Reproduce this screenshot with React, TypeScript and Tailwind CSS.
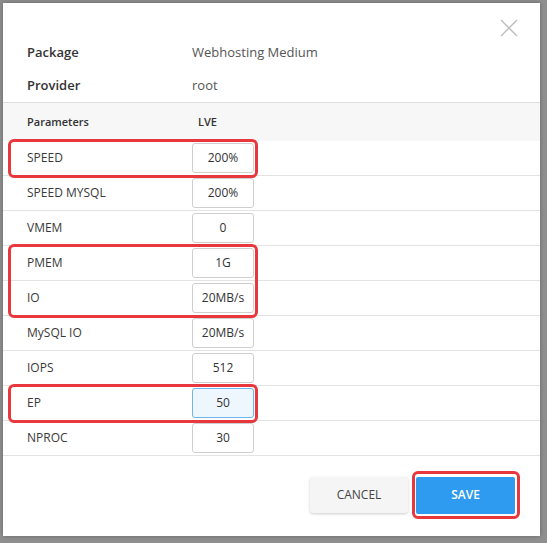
import React from "react";

const rows: { label: string; value: string }[] = [
  { label: "SPEED", value: "200%" },
  { label: "SPEED MYSQL", value: "200%" },
  { label: "VMEM", value: "0" },
  { label: "PMEM", value: "1G" },
  { label: "IO", value: "20MB/s" },
  { label: "MySQL IO", value: "20MB/s" },
  { label: "IOPS", value: "512" },
  { label: "EP", value: "50" },
  { label: "NPROC", value: "30" },
];

function Row({ label, value, focused }: { label: string; value: string; focused?: boolean }) {
  return (
    <div className="flex items-center h-[35px] border-b border-[#e3e3e3] pl-[24px]">
      <div className="w-[165px] text-[12px] text-[#3a3a3a]">{label}</div>
      <div
        className={
          focused
            ? "w-[62px] h-[30px] flex items-center justify-center rounded-[3px] border border-[#6db5f0] bg-[#eef7fe] text-[12px] text-[#333]"
            : "w-[62px] h-[30px] flex items-center justify-center rounded-[3px] border border-[#cfcfcf] bg-white text-[12px] text-[#333]"
        }
      >
        {value}
      </div>
    </div>
  );
}

function Highlight({ children }: { children: React.ReactNode }) {
  return (
    <div className="relative">
      {children}
      <div className="absolute left-[5px] w-[250px] top-[-2px] bottom-[-2px] border-[3px] border-[#e8383d] rounded-[6px] pointer-events-none" />
    </div>
  );
}

export default function App() {
  return (
    <div
      className="w-[547px] h-[543px] bg-[#8f8f8f] pt-[3px] pl-[3px] overflow-hidden"
      style={{ fontFamily: '"Open Sans", "Noto Sans", sans-serif' }}
    >
      <div className="relative w-[537px] h-[533px] bg-white shadow-[0_0_4px_rgba(0,0,0,0.3)] flex flex-col">
        <button className="absolute right-[22px] top-[16px] w-[18px] h-[18px] text-[#bdbdbd]">
          <svg viewBox="0 0 18 18" width="18" height="18" fill="none" stroke="currentColor" strokeWidth="1.4">
            <path d="M1 1L17 17M17 1L1 17" />
          </svg>
        </button>
        <div className="pt-[33px]">
          <div className="flex items-center h-[34px] pl-[24px]">
            <div className="w-[165px] text-[13px] font-semibold text-[#333]">Package</div>
            <div className="text-[13px] text-[#555]">Webhosting Medium</div>
          </div>
          <div className="flex items-center h-[32px] pl-[24px]">
            <div className="w-[165px] text-[13px] font-semibold text-[#333]">Provider</div>
            <div className="text-[13px] text-[#555]">root</div>
          </div>
        </div>
        <div className="flex items-center h-[39px] border-t border-[#dedede] bg-[#f7f7f7] pl-[24px]">
          <div className="w-[171px] text-[11px] font-semibold text-[#333]">Parameters</div>
          <div className="text-[11px] font-semibold text-[#333]">LVE</div>
        </div>
        <Highlight>
          <Row {...rows[0]} />
        </Highlight>
        <Row {...rows[1]} />
        <Row {...rows[2]} />
        <Highlight>
          <Row {...rows[3]} />
          <Row {...rows[4]} />
        </Highlight>
        <Row {...rows[5]} />
        <Row {...rows[6]} />
        <Highlight>
          <Row {...rows[7]} focused />
        </Highlight>
        <Row {...rows[8]} />
        <div className="flex-1 flex items-center justify-end gap-[8px] pr-[25px] pb-[2px]">
          <button className="w-[98px] h-[36px] rounded-[3px] bg-[#f5f5f5] shadow-[0_1px_3px_rgba(0,0,0,0.2)] text-[12px] text-[#444]">
            CANCEL
          </button>
          <div className="relative">
            <button className="w-[99px] h-[37px] rounded-[2px] bg-[#2e9bf0] text-[12px] font-semibold text-white">
              SAVE
            </button>
            <div className="absolute -left-[4px] -right-[5px] -top-[6px] -bottom-[5px] border-[3px] border-[#e8383d] rounded-[6px] pointer-events-none" />
          </div>
        </div>
      </div>
    </div>
  );
}
